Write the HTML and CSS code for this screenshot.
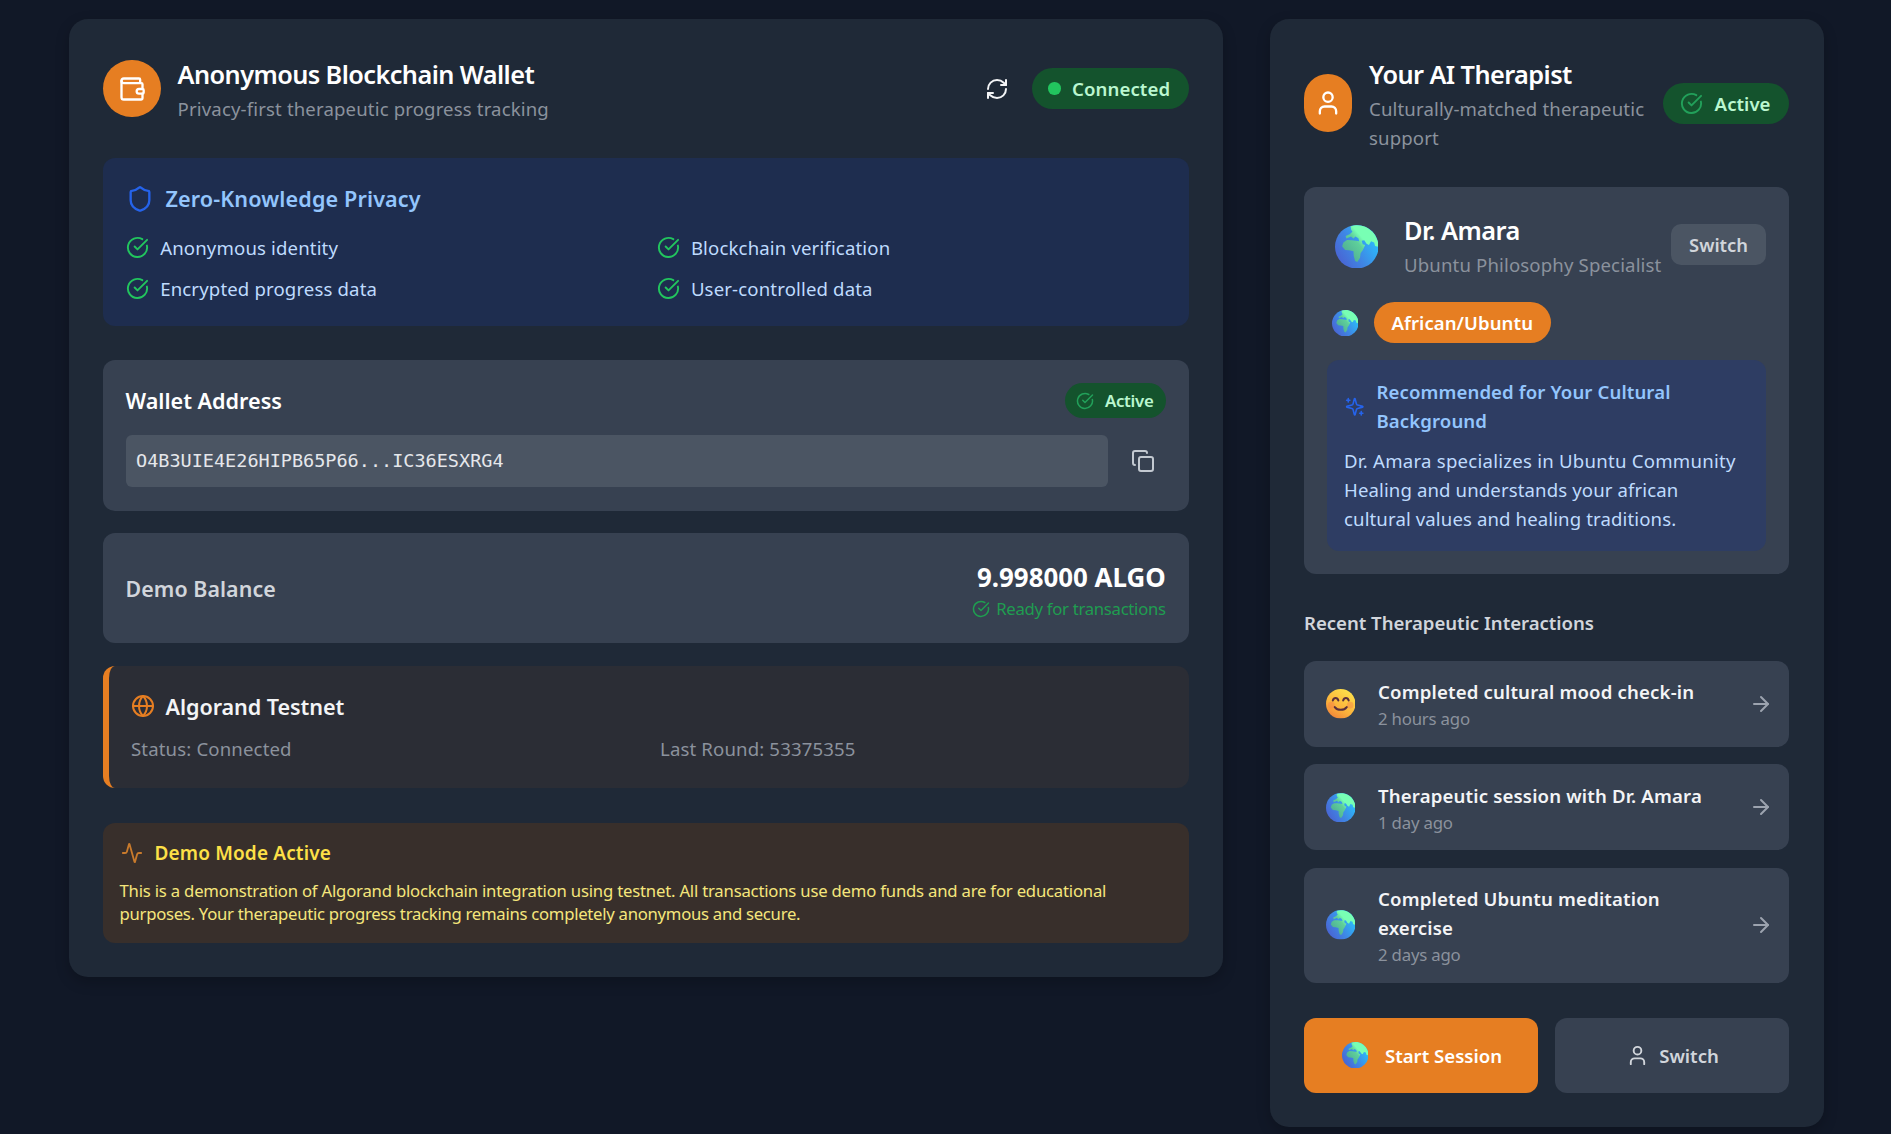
FILE: index.html
```html
<!DOCTYPE html>
<html lang="en">
<head>
<meta charset="utf-8">
<title>Anonymous Blockchain Wallet</title>
<link rel="stylesheet" href="styles.css">
</head>
<body>
<svg class="defs" aria-hidden="true">
  <defs>
    <linearGradient id="sea" x1="0.1" y1="0.9" x2="0.9" y2="0.4"><stop offset="0" stop-color="#4a62d2"/><stop offset="0.5" stop-color="#3f86e4"/><stop offset="1" stop-color="#2db6f8"/></linearGradient>
    <linearGradient id="land" x1="0.1" y1="0.8" x2="0.8" y2="0.2"><stop offset="0" stop-color="#4fae95"/><stop offset="0.5" stop-color="#5fd09a"/><stop offset="0.7" stop-color="#78ffb4"/></linearGradient>
    <symbol id="globe-emoji" viewBox="0 0 32 32">
      <circle cx="16" cy="16" r="16" fill="url(#sea)"/>
      <path fill="url(#land)" d="M11.500 1 C15 -.3 20 -.3 24 2.200 C28.500 5 31 9 31.800 13.500 L31.500 16 L29.500 15.500 L28.800 12.800 L26.500 12 L25 14.800 L23.200 13.800 L21.500 11.200 L19.600 11.600 L20.400 14.200 L22.200 14.800 L20.400 18.600 L18.800 20.800 L18.400 24 L16.400 27.200 L14.800 26.400 L13.800 22.800 L13.600 19.400 L10.500 18.600 L7.500 18.400 L5.200 15.600 L6.200 12.800 L8.800 11 L12.500 11.200 L17.800 12 L17.200 9.800 L15 8.400 L13.600 10 L11.800 8.400 L8.400 10 L7.800 8 L10.800 6.800 L12.800 5 L11.800 3.400 Z"/>
    </symbol>
    <linearGradient id="face" x1="0.1" y1="1" x2="0.7" y2="0"><stop offset="0" stop-color="#ee7a3a"/><stop offset="0.4" stop-color="#fbb03b"/><stop offset="1" stop-color="#fde04a"/></linearGradient>
    <symbol id="smile-emoji" viewBox="0 0 32 32">
      <circle cx="16" cy="16" r="16" fill="url(#face)"/>
      <g fill="#f47a4a" opacity=".4"><circle cx="5.800" cy="17.500" r="3.600"/><circle cx="26.200" cy="17.500" r="3.600"/></g>
      <g fill="none" stroke="#5a2f3c" stroke-width="2.200" stroke-linecap="round"><path d="M7.400 12.400c1-3.600 5-3.600 6 0M18.600 12.400c1-3.600 5-3.600 6 0M9.500 19.600c3 4 10 4 13 0"/></g>
    </symbol>
    <symbol id="check" viewBox="0 0 24 24"><path d="M21.801 10A10 10 0 1 1 17 3.335"/><path d="m9 11 3 3L22 4"/></symbol>
    <symbol id="user" viewBox="0 0 24 24"><path d="M19 21v-2a4 4 0 0 0-4-4H9a4 4 0 0 0-4 4v2"/><circle cx="12" cy="7" r="4"/></symbol>
    <symbol id="arrow" viewBox="0 0 24 24"><path d="M5 12h14"/><path d="m12 5 7 7-7 7"/></symbol>
  </defs>
</svg>
<main class="page">
  <section class="card wallet">
    <header class="card-head">
      <div class="brand"><svg class="icon i28" viewBox="0 0 24 24"><path d="M19 7V4a1 1 0 0 0-1-1H5a2 2 0 0 0 0 4h15a1 1 0 0 1 1 1v4h-3a2 2 0 0 0 0 4h3a1 1 0 0 0 1-1v-2a1 1 0 0 0-1-1"/><path d="M3 5v14a2 2 0 0 0 2 2h15a1 1 0 0 0 1-1v-4"/></svg></div>
      <div class="head-text">
        <h2 class="title">Anonymous Blockchain Wallet</h2>
        <p class="subtitle">Privacy-first therapeutic progress tracking</p>
      </div>
      <svg class="icon i24 refresh" viewBox="0 0 24 24"><path d="M3 12a9 9 0 0 1 9-9 9.750 9.750 0 0 1 6.740 2.740L21 8"/><path d="M21 3v5h-5"/><path d="M21 12a9 9 0 0 1-9 9 9.750 9.750 0 0 1-6.740-2.740L3 16"/><path d="M8 16H3v5"/></svg>
      <div class="badge connected"><span class="dot"></span><span>Connected</span></div>
    </header>

    <div class="privacy">
      <h3 class="box-title blue"><svg class="icon i28" viewBox="0 0 24 24"><path d="M20 13c0 5-3.500 7.500-7.660 8.950a1 1 0 0 1-.67-.01C7.500 20.500 4 18 4 13V6a1 1 0 0 1 1-1c2 0 4.500-1.200 6.240-2.720a1.170 1.170 0 0 1 1.520 0C14.510 3.810 17 5 19 5a1 1 0 0 1 1 1z"/></svg>Zero-Knowledge Privacy</h3>
      <ul class="features">
        <li><svg class="icon i23"><use href="#check"/></svg>Anonymous identity</li>
        <li><svg class="icon i23"><use href="#check"/></svg>Blockchain verification</li>
        <li><svg class="icon i23"><use href="#check"/></svg>Encrypted progress data</li>
        <li><svg class="icon i23"><use href="#check"/></svg>User-controlled data</li>
      </ul>
    </div>

    <div class="panel address">
      <div class="row"><h3 class="box-title">Wallet Address</h3><div class="badge small"><svg class="icon i18"><use href="#check"/></svg><span>Active</span></div></div>
      <div class="row code-row"><code>O4B3UIE4E26HIPB65P66...IC36ESXRG4</code><svg class="icon i24 copy" viewBox="0 0 24 24"><rect width="14" height="14" x="8" y="8" rx="2"/><path d="M4 16c-1.100 0-2-.9-2-2V4c0-1.100.9-2 2-2h10c1.100 0 2 .9 2 2"/></svg></div>
    </div>

    <div class="panel balance">
      <span class="balance-label">Demo Balance</span>
      <div class="balance-value"><strong>9.998000 ALGO</strong><span class="ready"><svg class="icon i18"><use href="#check"/></svg>Ready for transactions</span></div>
    </div>

    <div class="testnet">
      <h3 class="box-title"><svg class="icon i24" viewBox="0 0 24 24"><circle cx="12" cy="12" r="10"/><path d="M12 2a14.500 14.500 0 0 0 0 20 14.500 14.500 0 0 0 0-20"/><path d="M2 12h20"/></svg>Algorand Testnet</h3>
      <div class="stats"><span>Status: Connected</span><span>Last Round: 53375355</span></div>
    </div>

    <div class="demo">
      <h4><svg class="icon" viewBox="0 0 24 24"><path d="M22 12h-2.480a2 2 0 0 0-1.930 1.460l-2.350 8.360a.25.25 0 0 1-.48 0L9.240 2.180a.25.25 0 0 0-.48 0l-2.350 8.360A2 2 0 0 1 4.490 12H2"/></svg>Demo Mode Active</h4>
      <p>This is a demonstration of Algorand blockchain integration using testnet. All transactions use demo funds and are for educational<br><span class="second-line">purposes. Your therapeutic progress tracking remains completely anonymous and secure.</span></p>
    </div>
  </section>

  <section class="card therapist">
    <header class="card-head">
      <div class="brand narrow"><svg class="icon i28"><use href="#user"/></svg></div>
      <div class="head-text">
        <h2 class="title">Your AI Therapist</h2>
        <p class="subtitle">Culturally-matched therapeutic<br>support</p>
      </div>
      <div class="badge active"><svg class="icon i23"><use href="#check"/></svg><span>Active</span></div>
    </header>

    <div class="panel profile">
      <div class="profile-head">
        <svg class="e43"><use href="#globe-emoji"/></svg>
        <div class="profile-text"><h2 class="title">Dr. Amara</h2><p class="subtitle">Ubuntu Philosophy Specialist</p></div>
        <button class="mini">Switch</button>
      </div>
      <div class="culture"><svg class="e26"><use href="#globe-emoji"/></svg><span class="tag">African/Ubuntu</span></div>
      <div class="recommend">
        <h4><svg class="icon" viewBox="0 0 24 24"><path d="M9.937 15.500A2 2 0 0 0 8.500 14.063l-6.135-1.582a.5.5 0 0 1 0-.962L8.500 9.936A2 2 0 0 0 9.937 8.500l1.582-6.135a.5.5 0 0 1 .963 0L14.063 8.500A2 2 0 0 0 15.500 9.937l6.135 1.581a.5.5 0 0 1 0 .964L15.500 14.063a2 2 0 0 0-1.437 1.437l-1.582 6.135a.5.5 0 0 1-.963 0z"/><path d="M20 18v4M22 20h-4M4 2v4M2 4h4"/></svg><span>Recommended for Your Cultural<br>Background</span></h4>
        <p>Dr. Amara specializes in Ubuntu Community<br><span class="tight">Healing and understands your african<br>cultural values and healing traditions.</span></p>
      </div>
    </div>

    <h4 class="recent">Recent Therapeutic Interactions</h4>
    <ul class="history">
      <li class="panel"><svg class="e29"><use href="#smile-emoji"/></svg><div class="entry"><b>Completed cultural mood check-in</b><small>2 hours ago</small></div><svg class="icon i24"><use href="#arrow"/></svg></li>
      <li class="panel"><svg class="e29"><use href="#globe-emoji"/></svg><div class="entry"><b>Therapeutic session with Dr. Amara</b><small>1 day ago</small></div><svg class="icon i24"><use href="#arrow"/></svg></li>
      <li class="panel"><svg class="e29"><use href="#globe-emoji"/></svg><div class="entry"><b>Completed Ubuntu meditation<br>exercise</b><small>2 days ago</small></div><svg class="icon i24"><use href="#arrow"/></svg></li>
    </ul>

    <div class="actions">
      <button class="primary"><svg class="e26"><use href="#globe-emoji"/></svg>Start Session</button>
      <button class="secondary"><svg class="icon i23"><use href="#user"/></svg>Switch</button>
    </div>
  </section>
</main>
</body>
</html>
```
FILE: styles.css
```css
* { box-sizing: border-box; margin: 0; padding: 0; }
body {
  background: #111827;
  color: #d1d5db;
  font: 400 18.6px/29px "Noto Sans", "Open Sans", sans-serif;
  letter-spacing: 0.14px;
  min-height: 1134px;
}
ul { list-style: none; }
button { border: 0; font: inherit; color: inherit; letter-spacing: inherit; }
.defs { position: absolute; width: 0; height: 0; }
.icon { display: block; flex: none; fill: none; stroke: currentColor; stroke-width: 2; stroke-linecap: round; stroke-linejoin: round; }
.i18 { width: 18px; height: 18px; }
.i23 { width: 23px; height: 23px; }
.i24 { width: 24px; height: 24px; }
.i28 { width: 28px; height: 28px; }
.e26, .e29, .e43 { display: block; flex: none; }
.e26 { width: 26.5px; height: 26.5px; }
.e29 { width: 29.5px; height: 29.5px; }
.e43 { width: 43.5px; height: 43.5px; }

.page { display: flex; align-items: flex-start; gap: 46.5px; padding: 19px 67px 0 68.5px; }
.card { background: #1f2937; border-radius: 19px; padding: 34.5px; box-shadow: 0 5px 14px rgba(0, 0, 0, 0.22); white-space: nowrap; }
.wallet { width: 1154.5px; height: 957.5px; }
.therapist { width: 554.3px; height: 1107.5px; }
.panel { background: #374151; border-radius: 12px; }

.card-head { display: flex; align-items: center; }
.brand { width: 57.6px; height: 57.6px; flex: none; border-radius: 29px; background: #e67e22; color: #fff; display: flex; align-items: center; justify-content: center; }
.brand.narrow { width: 48px; border-radius: 24px; }
.head-text { flex: 1; margin-left: 17px; }
.title { font-size: 25.3px; font-weight: 600; line-height: 36px; letter-spacing: -0.58px; color: #fff; margin-bottom: 5px; padding-top: 2px; height: 36px; }
.subtitle { color: #8b929d; margin-top: -1px; padding-bottom: 1px; }
.refresh { margin-right: 22.8px; color: #f3f4f6; }
.badge { display: flex; align-items: center; height: 41px; border-radius: 20.5px; background: #14532d; color: #bbf7d0; font-weight: 600; letter-spacing: 0.04px; }
.badge .icon { color: #22a05a; }
.connected { width: 157px; padding-left: 16.5px; gap: 11.5px; letter-spacing: 0.1px; }
.dot { width: 12.5px; height: 12.5px; border-radius: 50%; background: #22c55e; }
.active { width: 126.7px; padding-left: 17px; gap: 12px; }
.small { height: 35px; width: 101.5px; padding-left: 11.5px; gap: 11px; font-size: 16.8px; letter-spacing: -0.3px; }

.box-title { display: flex; align-items: center; font-size: 21.6px; font-weight: 600; line-height: 29px; letter-spacing: 0; color: #fff; }
.privacy { height: 167.3px; margin-top: 34.8px; padding: 26px 22.4px 0; border-radius: 12px; background: #1e2d4f; color: #bfdbfe; }
.box-title.blue { color: #93c5fd; letter-spacing: 0.12px; gap: 11px; padding-left: 1px; }
.box-title.blue .icon { color: #2563eb; }
.features { display: grid; grid-template-columns: 1fr 1fr; column-gap: 21.5px; row-gap: 11.4px; margin-top: 20px; padding-left: 0.8px; }
.features li { display: flex; align-items: center; gap: 11px; }
.features .icon { color: #22c55e; }

.address { height: 150.5px; margin-top: 34.6px; padding: 23px 22.5px; }
.row { display: flex; align-items: center; justify-content: space-between; }
.code-row { margin-top: 17px; }
code { width: 982px; height: 52px; padding-left: 10.5px; border-radius: 6px; background: #4b5563; color: #e5e7eb; font: 18.5px/51px "DejaVu Sans Mono", monospace; letter-spacing: 0; }
.copy { margin-right: 11.5px; color: #c3c9d1; }

.balance { display: flex; align-items: center; justify-content: space-between; height: 110px; margin-top: 22.6px; padding: 0 22.8px 0 22.5px; }
.balance-label { font-size: 21.4px; font-weight: 600; letter-spacing: 0.06px; padding-top: 1px; }
.balance-value { display: flex; flex-direction: column; align-items: flex-end; padding-top: 5px; }
.balance-value strong { font-size: 25.9px; font-weight: 700; line-height: 36px; letter-spacing: 0; color: #fff; }
.ready { display: flex; align-items: center; gap: 6px; font-size: 16.7px; line-height: 28px; letter-spacing: -0.28px; color: #1f9d50; }

.testnet { height: 121.5px; margin-top: 23.2px; padding: 25.5px 22px 0; border-left: 6px solid #e67e22; border-radius: 12px; background: #2b2d35; color: #8b929d; }
.testnet .box-title { color: #f3f4f6; gap: 10.5px; letter-spacing: -0.08px; }
.testnet .icon { color: #e67e22; }
.stats { display: grid; grid-template-columns: 1fr 1fr; column-gap: 22.5px; margin-top: 13.5px; }

.demo { height: 120px; margin-top: 34.6px; padding: 16px 16.5px 0; border-radius: 12px; background: #382f2b; color: #f5e67c; font-size: 16.7px; line-height: 23.3px; letter-spacing: -0.2px; }
.demo h4 { display: flex; align-items: center; gap: 12px; padding-left: 1px; font-size: 19px; font-weight: 600; line-height: 29px; letter-spacing: 0.15px; color: #fde047; }
.demo .icon { width: 22px; height: 22px; color: #c87a2c; }
.demo p { margin-top: 11px; }
.second-line { letter-spacing: -0.27px; }

.profile { height: 386.7px; margin-top: 34.8px; padding: 23px; }
.profile-head { display: flex; align-items: center; height: 70px; }
.profile-head .e43 { margin: 2px 0 0 7.5px; }
.profile-text { margin-left: 26px; flex: 1; }
.profile-text .title { letter-spacing: -0.5px; }
.mini { width: 95.5px; height: 41px; margin-bottom: 2px; border-radius: 10px; background: #4b5563; color: #d1d5db; font-size: 18.4px; font-weight: 600; letter-spacing: 0; }
.culture { display: flex; align-items: center; gap: 15.5px; margin: 22px 0 0 4.5px; }
.tag { width: 177.5px; height: 41px; border-radius: 20.5px; background: #e67e22; color: #fff; font-weight: 600; letter-spacing: 0.05px; line-height: 41px; text-align: center; }
.recommend { height: 191px; margin-top: 17px; padding: 17px 17px 0; border-radius: 12px; background: #2e3d63; color: #bfdbfe; letter-spacing: 0.24px; }
.recommend h4 { display: flex; align-items: center; gap: 12px; padding-left: 1px; font-weight: 600; letter-spacing: 0.1px; color: #93c5fd; }
.recommend .icon { width: 19.5px; height: 19.5px; color: #2563eb; }
.recommend p { margin-top: 11px; }
.tight { letter-spacing: 0.11px; }

.recent { margin: 34.5px 0 23.3px; font-weight: 600; font-size: inherit; letter-spacing: -0.03px; }
.history { display: grid; gap: 17.3px; }
.history li { display: flex; align-items: center; padding: 16.6px 16.7px 16.5px 21.5px; }
.history .icon { color: #9ca3af; }
.entry { flex: 1; margin-left: 23px; }
.entry b, .entry small { display: block; }
.entry b { font-weight: 600; letter-spacing: 0.16px; color: #f3f4f6; }
.entry small { font-size: 16.8px; line-height: 23px; letter-spacing: -0.2px; color: #8b929d; padding-top: 1px; }

.actions { display: grid; grid-template-columns: 1fr 1fr; gap: 17.3px; margin-top: 35px; }
.actions button { display: flex; align-items: center; justify-content: center; height: 75px; border-radius: 12px; font-weight: 600; letter-spacing: 0; }
.actions .primary { background: #e67e22; color: #fff; gap: 16.5px; padding-left: 2px; }
.actions .secondary { background: #374151; gap: 10.5px; }
```
